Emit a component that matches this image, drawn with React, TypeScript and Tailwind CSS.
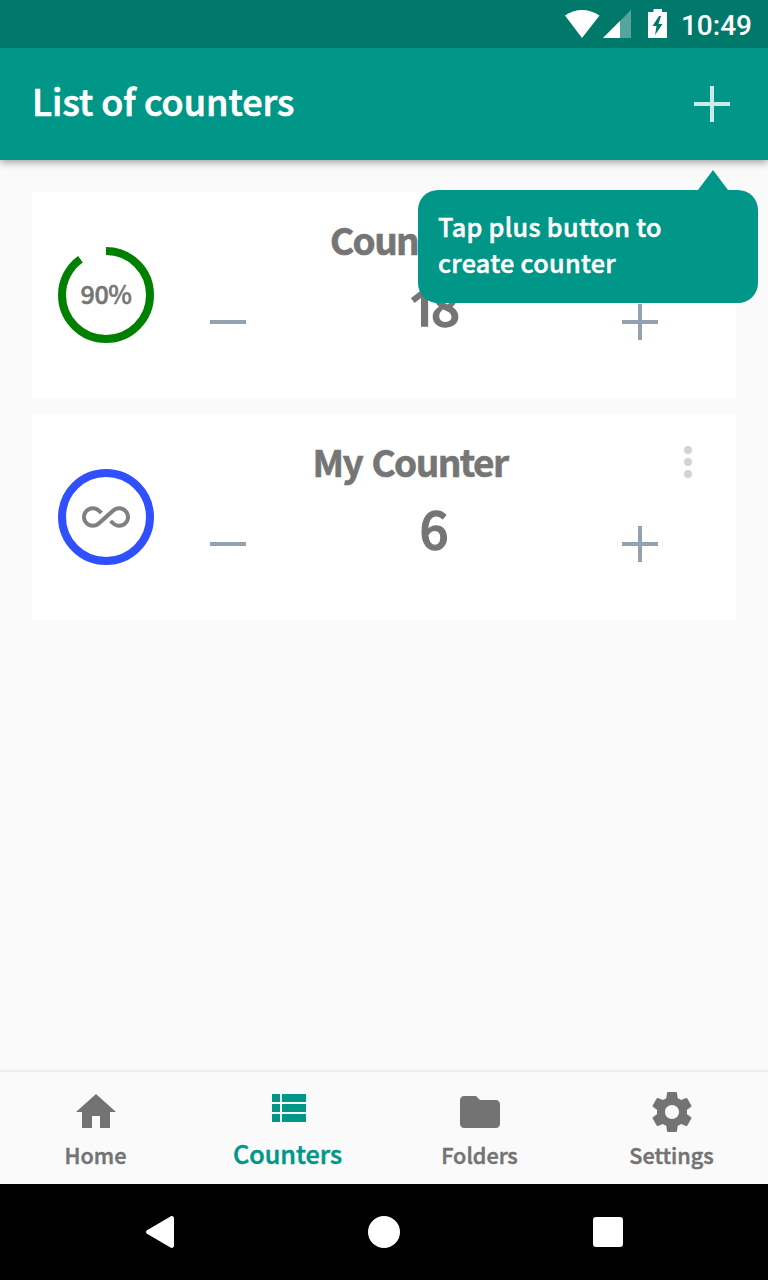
import React from "react";

function PlusIcon({ className }: { className: string }) {
  return (
    <svg width="36" height="36" viewBox="0 0 36 36" className={className} fill="currentColor">
      <path d="M16 0h4v16h16v4H20v16h-4V20H0v-4h16z" />
    </svg>
  );
}

function StatusBar() {
  return (
    <div className="z-20 flex h-12 shrink-0 items-center justify-end bg-[#00796b] pr-4 text-white">
      <svg width="102" height="30" viewBox="565 9 102 30" className="mr-[14px]" fill="#fff">
        <path d="M565 15.6C575 8.1 589 8.1 599.500 15.600L582 38z" />
        <path d="M631 10v28h-28z" opacity="0.33" />
        <path d="M620 21v17h-17z" />
        <path
          fillRule="evenodd"
          d="M653.500 9h8.500v3H667v26h-19V12h5.500zM659 16l-6.500 10h4l-1.500 9 7.500-11h-4l2.500-8z"
        />
      </svg>
      <span className="pt-[3px] font-[Roboto] text-[28px] leading-[34px] font-medium">10:49</span>
    </div>
  );
}

function Tooltip() {
  return (
    <div className="absolute top-[122px] right-[10px] z-20 w-[340px]">
      <svg width="30" height="20" viewBox="0 0 30 20" className="ml-[280px] block" fill="#009688">
        <path d="M15 0l15 20H0z" />
      </svg>
      <div className="h-[113px] rounded-[20px] bg-[#009688] px-5 pt-[18px] text-[25.2px] leading-[36px] font-medium tracking-[0.3px] text-white [-webkit-text-stroke:0.5px]">
        Tap plus button to
        <br />
        create counter
      </div>
    </div>
  );
}

type CounterProps = { title: string; value: number; percent?: number; color: string };

function Digits({ value }: { value: number }) {
  return (
    <span className="-mt-0.5 flex items-baseline text-[51px] leading-[72px] font-medium [-webkit-text-stroke:1.3px]">
      {String(value)
        .split("")
        .map((digit, i) => (
          <span
            key={i}
            className={digit === "1" ? "-mr-[3px] font-['Open_Sans'] font-semibold tracking-[-3px]" : undefined}
          >
            {digit}
          </span>
        ))}
    </span>
  );
}

function CounterCard({ title, value, percent, color }: CounterProps) {
  const length = 2 * Math.PI * 44;
  return (
    <div className="flex h-[206px] bg-white text-[#757575]">
      <div className="flex w-[148px] items-center justify-center">
        <div className="grid size-24 place-items-center">
          <svg width="96" height="96" viewBox="0 0 96 96" className="col-start-1 row-start-1 -rotate-90" fill="none">
            <circle
              cx="48"
              cy="48"
              r="44"
              stroke={color}
              strokeWidth="8"
              strokeDasharray={percent === undefined ? undefined : `${(length * percent) / 100} ${length}`}
            />
          </svg>
          {percent === undefined ? (
            <svg width="48" height="48" viewBox="0 0 24 24" className="col-start-1 row-start-1" fill="#808080">
              <path d="M18.6 6.620c-1.440 0-2.800.56-3.770 1.530L12 10.660 10.480 12h.01L7.800 14.390c-.64.64-1.490.99-2.400.99-1.870 0-3.390-1.510-3.390-3.380S3.530 8.620 5.400 8.620c.91 0 1.760.35 2.440 1.030l1.130 1 1.510-1.340L9.220 8.200C8.200 7.180 6.840 6.620 5.400 6.620 2.420 6.620 0 9.040 0 12s2.420 5.380 5.400 5.380c1.440 0 2.800-.56 3.770-1.530l2.830-2.500.01.01L13.520 12h-.01l2.690-2.390c.64-.64 1.490-.99 2.400-.99 1.870 0 3.390 1.510 3.390 3.380s-1.520 3.380-3.390 3.380c-.9 0-1.760-.35-2.440-1.030l-1.140-1.010-1.510 1.340 1.270 1.120c1.020 1.010 2.370 1.570 3.820 1.570 2.980 0 5.400-2.410 5.400-5.380s-2.420-5.370-5.400-5.370z" />
            </svg>
          ) : (
            <span className="col-start-1 row-start-1 pb-1 text-[25.2px] leading-9 font-medium tracking-[-0.5px] [-webkit-text-stroke:0.5px]">
              {percent}%
            </span>
          )}
        </div>
      </div>
      <div className="flex flex-1 flex-col pt-6">
        <div className="flex h-12 items-center">
          <h2 className="w-[460px] pb-0.5 text-center text-[37px] leading-[48px] font-bold tracking-[-1.6px] [-webkit-text-stroke:0.6px] [word-spacing:2.5px]">
            {title.split("1").map((part, i) => (
              <React.Fragment key={i}>
                {i > 0 && <span className="tracking-[-7px]">1</span>}
                {part}
              </React.Fragment>
            ))}
          </h2>
          <svg width="96" height="32" viewBox="0 0 96 32" fill="#d3d3d3">
            <circle cx="48" cy="4" r="4" />
            <circle cx="48" cy="16" r="4" />
            <circle cx="48" cy="28" r="4" />
          </svg>
        </div>
        <div className="flex h-[84px] items-center justify-between pr-[78px] pl-[30px]">
          <svg width="36" height="36" viewBox="0 0 36 36" className="mt-8" fill="#94a2b0">
            <path d="M0 16h36v4H0z" />
          </svg>
          <Digits value={value} />
          <PlusIcon className="mt-8 text-[#94a2b0]" />
        </div>
      </div>
    </div>
  );
}

const tabs = [
  { label: "Home", path: "M10 20v-6h4v6h5v-8h3L12 3 2 12h3v8z" },
  {
    label: "Counters",
    active: true,
    path: "M4 14h4v-4H4v4zm0 5h4v-4H4v4zM4 9h4V5H4v4zm5 5h12v-4H9v4zm0 5h12v-4H9v4zM9 5v4h12V5H9z",
  },
  {
    label: "Folders",
    path: "M10 4H4c-1.100 0-1.990.9-1.990 2L2 18c0 1.100.9 2 2 2h16c1.100 0 2-.9 2-2V8c0-1.100-.9-2-2-2h-8l-2-2z",
  },
  {
    label: "Settings",
    path: "M19.430 12.980c.04-.32.07-.64.07-.98s-.03-.66-.07-.98l2.110-1.650c.19-.15.24-.42.12-.64l-2-3.460c-.12-.22-.39-.3-.61-.22l-2.490 1c-.52-.4-1.080-.73-1.690-.98l-.38-2.650C14.460 2.180 14.250 2 14 2h-4c-.25 0-.46.18-.49.42l-.38 2.650c-.61.25-1.170.59-1.690.98l-2.490-1c-.23-.09-.49 0-.61.22l-2 3.460c-.13.22-.07.49.12.64l2.110 1.650c-.04.32-.07.65-.07.98s.03.66.07.98l-2.110 1.650c-.19.15-.24.42-.12.64l2 3.460c.12.22.39.3.61.22l2.490-1c.52.4 1.080.73 1.690.98l.38 2.650c.03.24.24.42.49.42h4c.25 0 .46-.18.49-.42l.38-2.650c.61-.25 1.170-.59 1.690-.98l2.490 1c.23.09.49 0 .61-.22l2-3.460c.12-.22.07-.49-.12-.64l-2.110-1.650zM12 15.500c-1.930 0-3.500-1.570-3.500-3.500s1.570-3.500 3.500-3.500 3.500 1.570 3.500 3.500-1.570 3.500-3.500 3.500z",
  },
];

export default function App() {
  return (
    <div className="flex h-[1280px] w-[768px] flex-col overflow-hidden bg-[#fafafa] font-['Noto_Sans_CJK_JP',sans-serif]">
      <StatusBar />
      <header className="relative z-10 flex h-28 shrink-0 items-center justify-between bg-[#009688] pr-[38px] pl-8 shadow-[0_2px_8px_rgba(0,0,0,0.4)]">
        <h1 className="pb-[9px] text-[36px] leading-[52px] font-medium text-white [-webkit-text-stroke:0.7px]">
          List of counters
        </h1>
        <PlusIcon className="text-[#cceae7]" />
        <Tooltip />
      </header>
      <main className="flex flex-1 flex-col gap-4 px-8 pt-8">
        <CounterCard title="Counter 1" value={18} percent={90} color="#008000" />
        <CounterCard title="My Counter" value={6} color="#304ffe" />
      </main>
      <nav className="grid h-28 shrink-0 grid-cols-4 bg-[#fafafa] shadow-[0_0_4px_rgba(0,0,0,0.16)]">
        {tabs.map((tab) => (
          <div
            key={tab.label}
            className={
              tab.active
                ? "flex flex-col items-center pt-3 text-[25.2px] text-[#009688]"
                : "flex flex-col items-center pt-4 text-[21.6px] text-[#737373]"
            }
          >
            <svg width="48" height="48" viewBox="0 0 24 24" fill="currentColor" className="shrink-0">
              <path d={tab.path} />
            </svg>
            <span
              className={
                tab.active
                  ? "mt-[3px] pr-px leading-9 font-medium [-webkit-text-stroke:0.5px]"
                  : "mt-[3px] pr-px leading-8 font-medium [-webkit-text-stroke:0.5px]"
              }
            >
              {tab.label}
            </span>
          </div>
        ))}
      </nav>
      <div className="z-10 flex h-24 shrink-0 items-center justify-between bg-black pr-[145px] pl-[146px]">
        <svg width="28" height="32" viewBox="0 0 28 32" fill="#fff">
          <path d="M24.500.4C26.200-.5 28 .5 28 2.400v27.200c0 1.900-1.800 2.900-3.500 2L1 17.700c-1.300-.8-1.300-2.600 0-3.400z" />
        </svg>
        <div className="size-8 rounded-full bg-white" />
        <div className="size-[30px] rounded-[3px] bg-white" />
      </div>
    </div>
  );
}
